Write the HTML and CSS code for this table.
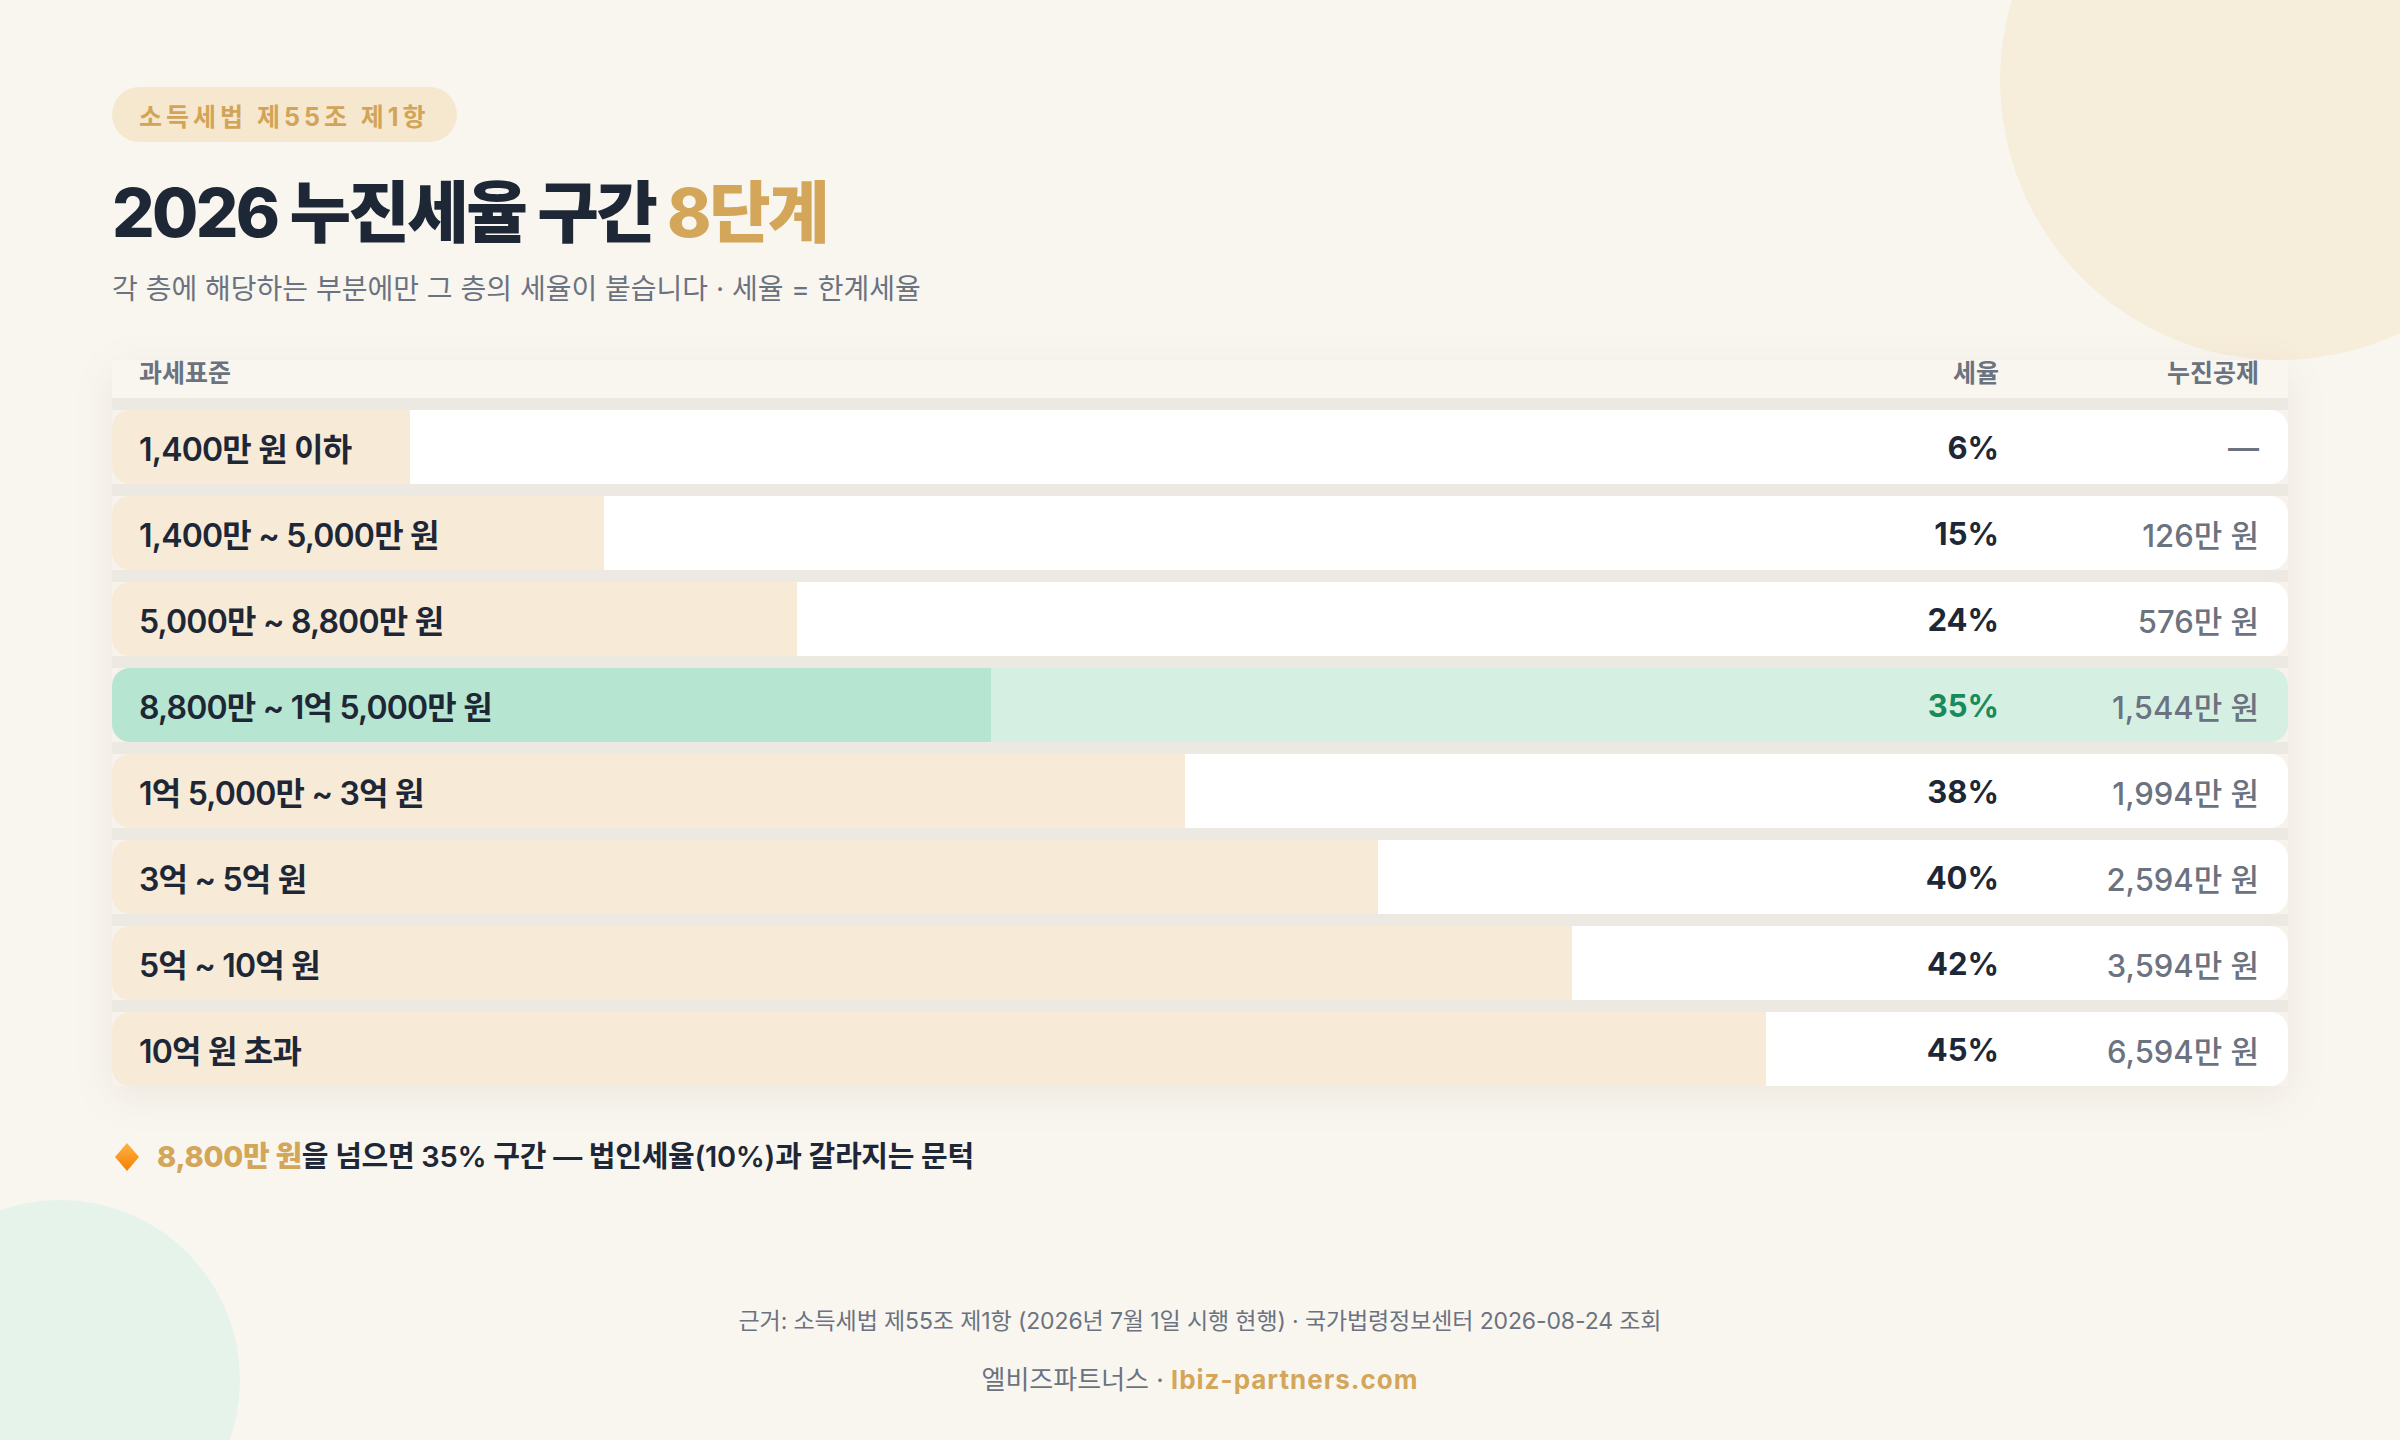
FILE: index.html
```html
<!DOCTYPE html>
<html lang="ko">
<head>
<meta charset="utf-8">
<title>2026 누진세율 구간 8단계</title>
<link rel="stylesheet" href="styles.css">
</head>
<body>
<div class="page">
  <div class="deco deco-top"></div>
  <div class="deco deco-bottom"></div>
  <main class="content">
    <span class="badge">소득세법 제55조 제1항</span>
    <h1 class="title">2026 누진세율 구간 <span class="accent">8단계</span></h1>
    <p class="subtitle">각 층에 해당하는 부분에만 그 층의 세율이 붙습니다 · 세율 = 한계세율</p>

    <div class="table">
      <div class="thead">
        <span class="c-label">과세표준</span>
        <span class="c-rate">세율</span>
        <span class="c-ded">누진공제</span>
      </div>
      <div class="row"><div class="bar" style="--w:13.7%"><span class="c-label">1,400만 원 이하</span><span class="c-rate">6%</span><span class="c-ded">—</span></div></div>
      <div class="row"><div class="bar" style="--w:22.6%"><span class="c-label">1,400만 ~ 5,000만 원</span><span class="c-rate">15%</span><span class="c-ded">126만 원</span></div></div>
      <div class="row"><div class="bar" style="--w:31.5%"><span class="c-label">5,000만 ~ 8,800만 원</span><span class="c-rate">24%</span><span class="c-ded">576만 원</span></div></div>
      <div class="row"><div class="bar bar-hl" style="--w:40.4%"><span class="c-label">8,800만 ~ 1억 5,000만 원</span><span class="c-rate">35%</span><span class="c-ded">1,544만 원</span></div></div>
      <div class="row"><div class="bar" style="--w:49.3%"><span class="c-label">1억 5,000만 ~ 3억 원</span><span class="c-rate">38%</span><span class="c-ded">1,994만 원</span></div></div>
      <div class="row"><div class="bar" style="--w:58.2%"><span class="c-label">3억 ~ 5억 원</span><span class="c-rate">40%</span><span class="c-ded">2,594만 원</span></div></div>
      <div class="row"><div class="bar" style="--w:67.1%"><span class="c-label">5억 ~ 10억 원</span><span class="c-rate">42%</span><span class="c-ded">3,594만 원</span></div></div>
      <div class="row"><div class="bar" style="--w:76.0%"><span class="c-label">10억 원 초과</span><span class="c-rate">45%</span><span class="c-ded">6,594만 원</span></div></div>
    </div>

    <p class="note">
      <svg class="diamond" viewBox="0 0 26 30" width="26" height="30" aria-hidden="true">
        <defs>
          <linearGradient id="dg" x1="0" y1="0" x2="0" y2="1">
            <stop offset="0" stop-color="#ffb446"/>
            <stop offset="1" stop-color="#f57f00"/>
          </linearGradient>
        </defs>
        <polygon points="13,1 25,15 13,29 1,15" fill="url(#dg)"/>
      </svg>
      <span><strong class="gold">8,800만 원</strong>을 넘으면 35% 구간 — 법인세율(10%)과 갈라지는 문턱</span>
    </p>

    <footer class="footer">
      <p class="source">근거: 소득세법 제55조 제1항 (2026년 7월 1일 시행 현행) · 국가법령정보센터 2026-08-24 조회</p>
      <p class="brand">엘비즈파트너스 · <span class="site">lbiz-partners.com</span></p>
    </footer>
  </main>
</div>
</body>
</html>
```

FILE: styles.css
```css
* { box-sizing: border-box; }

html, body {
  margin: 0;
  padding: 0;
}

body {
  background: #f9f6f0;
  font-family: Inter, "Noto Sans CJK KR", "Noto Sans", sans-serif;
  color: #1e2736;
}

.page {
  position: relative;
  width: 2400px;
  height: 1440px;
  overflow: hidden;
  background: #f9f6f0;
}

.deco {
  position: absolute;
  border-radius: 50%;
  z-index: 0;
}

.deco-top {
  width: 560px;
  height: 560px;
  top: -200px;
  right: -160px;
  background: #f7eddb;
}

.deco-bottom {
  width: 360px;
  height: 360px;
  left: -120px;
  bottom: -120px;
  background: #e6f3ea;
}

.content {
  position: relative;
  z-index: 1;
  padding: 87px 112px 0;
  display: flex;
  flex-direction: column;
  align-items: flex-start;
}

.badge {
  display: inline-flex;
  align-items: center;
  height: 55px;
  padding: 0 27px;
  border-radius: 28px;
  background: #f6e8cf;
  color: #d2a458;
  font-size: 25px;
  font-weight: 700;
  letter-spacing: 4px;
}

.title {
  margin: 31px 0 0;
  font-size: 67px;
  line-height: 80px;
  font-weight: 800;
  letter-spacing: -0.04em;
  color: #1e2736;
}

.accent { color: #d4a65a; }

.subtitle {
  margin: 18px 0 0;
  font-size: 28px;
  line-height: 36px;
  color: #6b7280;
  letter-spacing: 0;
}

.table {
  margin-top: 53px;
  width: 100%;
  background: #ece8e2;
  box-shadow: 0 10px 40px rgba(110, 90, 50, 0.09);
}

.thead {
  display: flex;
  align-items: flex-start;
  height: 38px;
  padding: 0 29px 0 27px;
  background: #f9f6f0;
  color: #6b7280;
  font-size: 25px;
  line-height: 26px;
  font-weight: 700;
}

.row {
  margin-top: 12px;
  background: #f7f3ec;
}

.bar {
  --fill: #f7ebd8;
  --rest: #ffffff;
  display: flex;
  align-items: center;
  height: 74px;
  padding: 0 29px 0 27px;
  border-radius: 18px;
  background: linear-gradient(90deg, var(--fill) 0, var(--fill) var(--w), var(--rest) var(--w), var(--rest) 100%);
  font-size: 31px;
}

.bar-hl {
  --fill: #b6e5d2;
  --rest: #d5f0e3;
}

.c-label {
  flex: 1;
  font-size: 32px;
  font-weight: 600;
  letter-spacing: -0.025em;
}

.c-rate {
  width: 200px;
  text-align: right;
  font-weight: 700;
}

.c-ded {
  width: 260px;
  text-align: right;
  color: #6b7280;
  font-weight: 500;
}

.thead .c-label,
.thead .c-rate,
.thead .c-ded {
  font-size: 25px;
  font-weight: 700;
  color: #6b7280;
  letter-spacing: 0;
}

.bar-hl .c-rate { color: #1a8a5a; }

.note {
  margin: 51px 0 0;
  display: flex;
  align-items: center;
  gap: 17px;
  font-size: 29px;
  line-height: 40px;
  font-weight: 600;
  letter-spacing: -0.01em;
  color: #1e2736;
  padding-left: 2px;
}

.diamond { flex: none; }

.gold {
  color: #d4a65a;
  font-weight: 800;
}

.footer {
  align-self: stretch;
  margin-top: 128px;
  text-align: center;
}

.source {
  margin: 0;
  font-size: 23px;
  line-height: 32px;
  color: #6b7280;
  letter-spacing: -0.005em;
}

.brand {
  margin: 26px 0 0;
  font-size: 26px;
  line-height: 34px;
  color: #6b7280;
}

.site {
  color: #d4a65a;
  font-weight: 700;
  letter-spacing: 1px;
}
```
